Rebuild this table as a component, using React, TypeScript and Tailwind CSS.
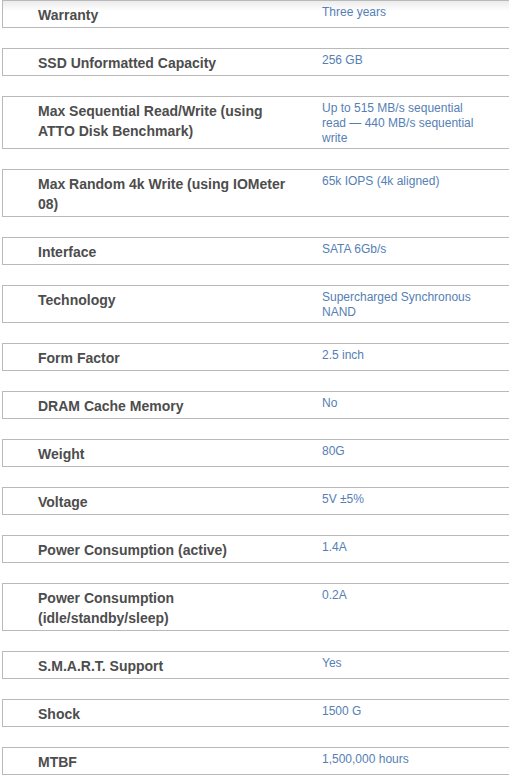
const specs: { label: string; value: string }[] = [
  { label: "Warranty", value: "Three years" },
  { label: "SSD Unformatted Capacity", value: "256 GB" },
  { label: "Max Sequential Read/Write (using ATTO Disk Benchmark)", value: "Up to 515 MB/s sequential read — 440 MB/s sequential write" },
  { label: "Max Random 4k Write (using IOMeter 08)", value: "65k IOPS (4k aligned)" },
  { label: "Interface", value: "SATA 6Gb/s" },
  { label: "Technology", value: "Supercharged Synchronous NAND" },
  { label: "Form Factor", value: "2.5 inch" },
  { label: "DRAM Cache Memory", value: "No" },
  { label: "Weight", value: "80G" },
  { label: "Voltage", value: "5V ±5%" },
  { label: "Power Consumption (active)", value: "1.4A" },
  { label: "Power Consumption (idle/standby/sleep)", value: "0.2A" },
  { label: "S.M.A.R.T. Support", value: "Yes" },
  { label: "Shock", value: "1500 G" },
  { label: "MTBF", value: "1,500,000 hours" },
]

export default function App() {
  return (
    <div
      className="w-[509px] h-[777px] overflow-hidden bg-white pl-[2px]"
      style={{ fontFamily: '"Liberation Sans", Arial, sans-serif' }}
    >
      <div className="flex flex-col gap-[20px]">
        {specs.map((s, i) => (
          <div
            key={s.label}
            className={
              "flex border-y border-l border-[#b9b9b9] " +
              (i === 0 ? "bg-gradient-to-b from-[#ececec] to-white to-[40%]" : "bg-white")
            }
          >
            <div className="w-[290px] shrink-0 pl-[35px] pt-[4px] pb-[2px] text-[14px] leading-[20px] font-bold text-[#4d4d4d]">
              {s.label}
            </div>
            <div className="w-[189px] shrink-0 pl-[29px] pt-[4px] pb-[2px] text-[12px] leading-[15px] text-[#5580b5]">
              {s.value}
            </div>
          </div>
        ))}
      </div>
    </div>
  )
}
